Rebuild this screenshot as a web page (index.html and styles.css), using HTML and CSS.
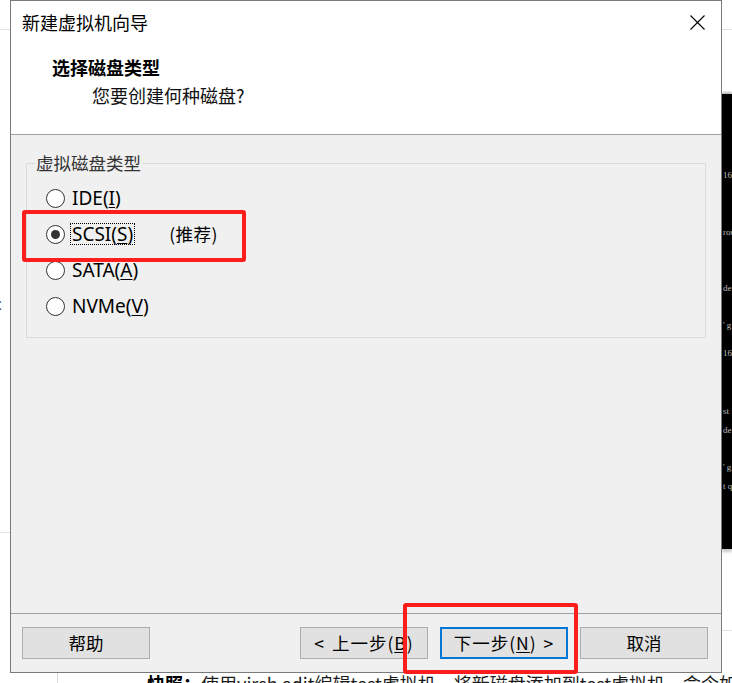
FILE: index.html
```html
<!DOCTYPE html>
<html lang="zh-CN">
<head>
<meta charset="utf-8">
<title>新建虚拟机向导</title>
<link rel="stylesheet" href="styles.css">
</head>
<body>
<div class="backdrop">
  <div class="rule rule-tl"></div>
  <div class="rule rule-tr"></div>
  <div class="rule rule-ll"></div>
  <div class="rule rule-rl"></div>
  <div class="vrule"></div>
  <div class="stray">c</div>
  <div class="terminal">
    <span class="t-line" style="top:76px">16</span>
    <span class="t-line" style="top:133px">rou</span>
    <span class="t-line" style="top:189px">de</span>
    <span class="t-line" style="top:226px">' g</span>
    <span class="t-line" style="top:254px">16</span>
    <span class="t-line" style="top:312px">st</span>
    <span class="t-line" style="top:331px">de</span>
    <span class="t-line" style="top:368px">' g</span>
    <span class="t-line" style="top:387px">t q</span>
  </div>
  <p class="article"><b>快照：</b>使用virsh edit编辑test虚拟机，将新磁盘添加到test虚拟机，命令如下</p>
</div>

<div class="dialog">
  <div class="top">
    <div class="titlebar">
      <span class="title">新建虚拟机向导</span>
      <svg class="close" width="15" height="15" viewBox="0 0 15 15">
        <path d="M0.5 0.5 L14.5 14.5 M14.5 0.5 L0.5 14.5" stroke="#000" stroke-width="1.1" fill="none"/>
      </svg>
    </div>
    <div class="header">
      <div class="h-title">选择磁盘类型</div>
      <div class="h-sub">您要创建何种磁盘?</div>
    </div>
  </div>

  <div class="content">
    <div class="group">
      <span class="group-label">虚拟磁盘类型</span>
      <div class="radio-row">
        <span class="radio"></span>
        <span class="r-label">IDE(<u>I</u>)</span>
      </div>
      <div class="radio-row">
        <span class="radio checked"></span>
        <span class="r-label focus">SCSI(<u>S</u>)</span>
        <span class="recommend">(推荐)</span>
      </div>
      <div class="radio-row">
        <span class="radio"></span>
        <span class="r-label">SATA(<u>A</u>)</span>
      </div>
      <div class="radio-row">
        <span class="radio"></span>
        <span class="r-label">NVMe(<u>V</u>)</span>
      </div>
    </div>
  </div>

  <div class="footer">
    <button class="btn">帮助</button>
    <div class="spacer"></div>
    <button class="btn btn-wide">&lt; 上一步(<u>B</u>)</button>
    <button class="btn btn-wide btn-default">下一步(<u>N</u>) &gt;</button>
    <button class="btn">取消</button>
  </div>
</div>

<div class="mark mark-scsi"></div>
<div class="mark mark-next"></div>
</body>
</html>
```

FILE: styles.css
```css
html, body {
  margin: 0;
  padding: 0;
}

body {
  width: 732px;
  height: 683px;
  overflow: hidden;
  position: relative;
  background: #ffffff;
  font-family: "Noto Sans CJK SC", "Noto Sans", sans-serif;
  color: #000;
}

/* ---------- background page (behind the window) ---------- */
.backdrop {
  position: absolute;
  inset: 0;
}

.rule {
  position: absolute;
  height: 1px;
  background: #e2e2e2;
}
.rule-tl { left: 0; top: 29px; width: 10px; }
.rule-tr { left: 722px; top: 29px; width: 10px; }
.rule-ll { left: 0; top: 532px; width: 10px; }
.rule-rl { left: 722px; top: 630px; width: 10px; }

.vrule {
  position: absolute;
  left: 57px;
  top: 673px;
  width: 1px;
  height: 10px;
  background: #dcdcdc;
}

.stray {
  position: absolute;
  left: -6px;
  top: 294px;
  font-family: "Noto Sans", sans-serif;
  font-size: 16px;
  line-height: 20px;
  color: #333;
}

.terminal {
  position: absolute;
  left: 722px;
  top: 94px;
  width: 10px;
  height: 455px;
  background: #000;
  box-shadow: 0 -2px 2px #bdbdbd, 0 3px 3px #c8c8c8;
  overflow: hidden;
}

.t-line {
  position: absolute;
  left: 1px;
  font-family: "Liberation Serif", serif;
  font-size: 9px;
  line-height: 10px;
  color: #bdbdbd;
  white-space: pre;
}

.article {
  position: absolute;
  left: 147px;
  top: 674px;
  margin: 0;
  font-size: 18px;
  line-height: 18px;
  white-space: nowrap;
  color: #1a1a1a;
}
.article b {
  font-weight: 700;
  color: #000;
}

/* ---------- dialog window ---------- */
.dialog {
  position: absolute;
  left: 10px;
  top: 0;
  width: 712px;
  height: 673px;
  box-sizing: border-box;
  border: 1px solid #7a7a7a;
  background: #f0f0f0;
  display: flex;
  flex-direction: column;
}

.top {
  height: 134px;
  box-sizing: border-box;
  background: #ffffff;
  border-bottom: 1px solid #a0a0a0;
}

.titlebar {
  height: 42px;
  display: flex;
  align-items: center;
  justify-content: space-between;
  padding: 0 16px 0 11px;
}

.title {
  font-size: 18px;
  line-height: 24px;
  color: #000;
}

.close {
  display: block;
  margin-top: 1px;
}

.header {
  padding: 12px 0 0 41px;
}

.h-title {
  font-size: 18px;
  line-height: 25px;
  font-weight: 700;
  color: #000;
}

.h-sub {
  margin: 3px 0 0 40px;
  font-size: 18px;
  line-height: 25px;
  color: #111;
}

.content {
  flex: 1;
  padding: 28px 15px 0;
}

.group {
  position: relative;
  height: 175px;
  box-sizing: border-box;
  border: 1px solid #dcdcdc;
  padding: 16px 0 0 19px;
}

.group-label {
  position: absolute;
  left: 8px;
  top: -12px;
  padding: 0 1px;
  background: #f0f0f0;
  font-size: 17.5px;
  line-height: 22px;
  color: #333;
}

.radio-row {
  height: 36px;
  display: flex;
  align-items: center;
}

.radio {
  width: 19px;
  height: 19px;
  box-sizing: border-box;
  border: 1px solid #333;
  border-radius: 50%;
  background: #fff;
  display: flex;
  align-items: center;
  justify-content: center;
  flex: none;
}

.radio.checked::after {
  content: "";
  width: 9px;
  height: 9px;
  border-radius: 50%;
  background: #333;
}

.r-label {
  margin-left: 5px;
  padding: 0 1px;
  border: 1px solid transparent;
  font-family: "Noto Sans", "Noto Sans CJK SC", sans-serif;
  font-size: 19px;
  line-height: 20px;
  color: #000;
}

.r-label u {
  text-underline-offset: 2px;
}

.r-label.focus {
  border: 1px dotted #000;
}

.recommend {
  margin-left: 34px;
  font-size: 17.5px;
  line-height: 22px;
  letter-spacing: 0.5px;
  color: #000;
}

.footer {
  height: 59px;
  box-sizing: border-box;
  border-top: 1px solid #a0a0a0;
  padding: 13px 13px 0 11px;
  display: flex;
  align-items: flex-start;
  gap: 12px;
}

.spacer {
  flex: 1;
  margin-left: -12px;
}

.btn {
  width: 128px;
  height: 32px;
  box-sizing: border-box;
  border: 1px solid #adadad;
  background: #e1e1e1;
  padding: 0;
  margin: 0;
  font-family: "Noto Sans CJK SC", "Noto Sans", sans-serif;
  font-size: 17.5px;
  line-height: 22px;
  color: #000;
  white-space: nowrap;
  flex: none;
}

.btn-wide {
  letter-spacing: 1px;
  word-spacing: 2px;
}

.btn u {
  text-underline-offset: 2px;
}

.btn-default {
  border: 2px solid #0078d7;
}

/* ---------- red annotation boxes (over the screenshot) ---------- */
.mark {
  position: absolute;
  box-sizing: border-box;
  border: 4px solid #fc1d1d;
  border-radius: 3px;
}

.mark-scsi {
  left: 22px;
  top: 210px;
  width: 224px;
  height: 52px;
}

.mark-next {
  left: 403px;
  top: 603px;
  width: 175px;
  height: 71px;
}
```
